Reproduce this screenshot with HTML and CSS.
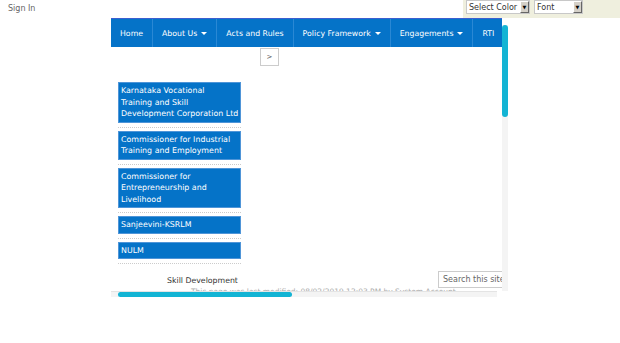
FILE: index.html
```html
<!DOCTYPE html>
<html lang="en">
<head>
  <meta charset="UTF-8" />
  <title>Skill Development</title>
  <link rel="stylesheet" href="styles.css">
</head>
<body>
  <div class="topbar">
    <a class="signin" href="#">Sign In</a>
    <div class="tools">
      <div class="fake-select sel-color"><span>Select Color</span><i>&#9660;</i></div>
      <div class="fake-select sel-font"><span>Font</span><i>&#9660;</i></div>
    </div>
  </div>

  <div class="frame">
    <div class="viewport">
      <div class="content">
        <nav class="mainnav">
          <a href="#">Home</a>
          <a href="#">About Us <b class="caret"></b></a>
          <a href="#">Acts and Rules</a>
          <a href="#">Policy Framework <b class="caret"></b></a>
          <a href="#">Engagements <b class="caret"></b></a>
          <a href="#">RTI</a>
          <a href="#">Contact Us</a>
        </nav>

        <div class="pager"><button class="next">&gt;</button></div>

        <ul class="links">
          <li><a href="#">Karnataka Vocational<br>Training and Skill Development Corporation Ltd</a></li>
          <li><a href="#">Commissioner for Industrial Training and Employment</a></li>
          <li><a href="#">Commissioner for Entrepreneurship and Livelihood</a></li>
          <li><a href="#">Sanjeevini-KSRLM</a></li>
          <li><a href="#">NULM</a></li>
        </ul>

        <div class="footer-row">
          <span class="site-title">Skill Development</span>
          <input class="search" type="text" placeholder="Search this site" />
        </div>
        <p class="modified">This page was last modified: 08/02/2019 12:03 PM by System Account</p>
      </div>
    </div>
    <div class="vbar"><span class="thumb"></span></div>
    <div class="hbar"><span class="thumb"></span></div>
    <div class="corner"></div>
  </div>
</body>
</html>
```

FILE: styles.css
```css
body {
  margin: 0;
  font-family: "DejaVu Sans", sans-serif;
  background: #fff;
  color: #333;
}
.topbar {
  height: 18px;
  display: flex;
  justify-content: space-between;
  align-items: flex-start;
}
.signin {
  font-size: 8px;
  color: #666;
  text-decoration: none;
  margin: 4px 0 0 8px;
}
.tools {
  width: 157px;
  height: 18px;
  background: #efefde;
  display: flex;
  gap: 4px;
  padding: 0 0 0 3px;
  box-sizing: border-box;
}
.fake-select {
  height: 14px;
  box-sizing: border-box;
  background: #fff;
  border: 1px solid #c8c8c8;
  display: flex;
  align-items: center;
  justify-content: space-between;
  font-size: 8px;
  color: #333;
  padding-left: 2px;
  white-space: nowrap;
  overflow: hidden;
}
.fake-select i {
  font-style: normal;
  font-size: 5px;
  width: 9px;
  height: 12px;
  flex: none;
  box-sizing: border-box;
  background: #d4d0c8;
  border: 1px solid;
  border-color: #fff #666 #666 #fff;
  display: flex;
  align-items: center;
  justify-content: center;
  color: #000;
}
.sel-color { width: 64px; }
.sel-font { width: 49px; }

/* zone défilante avec barres dessinées */
.frame {
  margin-left: 111px;
  display: grid;
  grid-template-columns: 391px 6px;
  grid-template-rows: 273px 6px;
}
.viewport {
  overflow: hidden;
}
.vbar {
  padding-top: 7px;
  background: linear-gradient(#fff 0 7px, #f4f4f4 7px);
}
.vbar .thumb {
  display: block;
  width: 6px;
  height: 92px;
  border-radius: 3px;
  background: #13b4d4;
}
.hbar {
  padding-left: 7px;
  background: #f4f4f4;
  border-top: 1px solid #e4e4e4;
  box-sizing: border-box;
  width: 386px;
}
.hbar .thumb {
  display: block;
  width: 174px;
  height: 5px;
  border-radius: 3px;
  background: #13b4d4;
}
.content {
  width: 880px;
  height: 850px;
}
.mainnav {
  display: flex;
  height: 29px;
  background: #0573c8;
  border-top: 1px solid #3b5fd0;
  box-sizing: border-box;
}
.mainnav a {
  color: #fff;
  font-size: 7.8px;
  text-decoration: none;
  padding: 0 9px;
  display: flex;
  align-items: center;
  border-right: 1px solid #2a88d4;
  white-space: nowrap;
}
.caret {
  display: inline-block;
  margin-left: 4px;
  border-top: 3px solid #fff;
  border-left: 3px solid transparent;
  border-right: 3px solid transparent;
}
.pager {
  padding: 1px 0 0 149px;
}
.next {
  display: block;
  width: 19px;
  height: 18px;
  padding: 0;
  background: #fff;
  border: 1px solid #ccc;
  font-size: 7px;
  color: #555;
  font-family: "DejaVu Sans", sans-serif;
}
.links {
  list-style: none;
  margin: 16px 0 0 7px;
  padding: 0;
  width: 123px;
}
.links li {
  padding-bottom: 4px;
  margin-bottom: 3px;
  border-bottom: 1px dotted #ccc;
}
.links a {
  display: block;
  background: #0573c8;
  border: 1px solid #4f95d8;
  color: #fff;
  font-size: 7.9px;
  line-height: 11.5px;
  padding: 2px 1px 2px 2px;
  text-decoration: none;
}
.footer-row {
  position: relative;
  height: 17px;
  margin-top: 7px;
}
.site-title {
  position: absolute;
  left: 56px;
  top: 5px;
  font-size: 7.8px;
  color: #333;
}
.search {
  position: absolute;
  left: 327px;
  top: 0;
  width: 90px;
  height: 17px;
  box-sizing: border-box;
  border: 1px solid #ccc;
  font-size: 8px;
  padding: 0 4px;
  font-family: "DejaVu Sans", sans-serif;
}
.search::placeholder { color: #666; }
.modified {
  margin: -1px 0 0 80px;
  font-size: 7.5px;
  color: #aaa;
}
```
